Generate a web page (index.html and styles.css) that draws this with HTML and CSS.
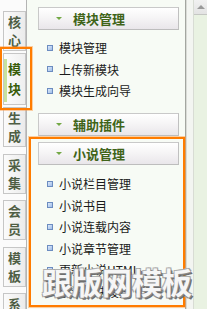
FILE: index.html
```html
<!DOCTYPE html>
<html lang="zh-CN">
<head>
<meta charset="utf-8">
<title>模块</title>
<link rel="stylesheet" href="styles.css">
</head>
<body>
<div class="app">
  <nav class="tabs">
    <div class="tab tab-first"><span>核</span><span>心</span></div>
    <div class="tab tab-on"><span>模</span><span>块</span></div>
    <div class="tab tab-after"><span>生</span><span>成</span></div>
    <div class="tab"><span>采</span><span>集</span></div>
    <div class="tab"><span>会</span><span>员</span></div>
    <div class="tab"><span>模</span><span>板</span></div>
    <div class="tab"><span>系</span><span>统</span></div>
  </nav>
  <main class="panel">
    <section class="sec">
      <div class="hd hd-1"><i class="arr"></i>模块管理</div>
      <ul class="list list-1">
        <li><i class="dot"></i>模块管理</li>
        <li><i class="dot"></i>上传新模块</li>
        <li><i class="dot"></i>模块生成向导</li>
      </ul>
    </section>
    <section class="sec">
      <div class="hd hd-2"><i class="arr"></i>辅助插件</div>
    </section>
    <section class="sec">
      <div class="hd hd-3"><i class="arr"></i>小说管理</div>
      <ul class="list list-3">
        <li><i class="dot"></i>小说栏目管理</li>
        <li><i class="dot"></i>小说书目</li>
        <li><i class="dot"></i>小说连载内容</li>
        <li><i class="dot"></i>小说章节管理</li>
        <li><i class="dot"></i>更新小说HTML</li>
        <li><i class="dot"></i>小说模块设置</li>
      </ul>
    </section>
  </main>
  <aside class="rail">
    <div class="sb"><div class="sb-up"><i class="up"></i></div></div>
  </aside>
  <div class="mark mark-tab"></div>
  <div class="mark mark-sec"></div>
  <div class="wm">跟版网模板</div>
</div>
</body>
</html>
```

FILE: styles.css
```css
* { box-sizing: border-box; }
html, body { margin: 0; padding: 0; }
body {
  width: 207px;
  height: 309px;
  overflow: hidden;
  font-family: "Noto Sans CJK SC", "Liberation Sans", sans-serif;
  background: #f7fbf5;
}
.app {
  position: relative;
  display: flex;
  width: 207px;
  height: 309px;
  overflow: hidden;
}

/* left tabs */
.tabs {
  width: 27px;
  flex: none;
  padding: 11px 0 0 3px;
  background: #fbfbfb;
  border-right: 1px solid #b4b4b4;
  display: flex;
  flex-direction: column;
}
.tab {
  width: 23px;
  height: 40px;
  flex: none;
  margin-bottom: 6.5px;
  border: 1px solid #c6c6c6;
  background: linear-gradient(90deg, #fbfbfb, #ebebeb);
  display: flex;
  flex-direction: column;
  align-items: center;
  padding-top: 1px;
  font-size: 13px;
  font-weight: 700;
  line-height: 18px;
  color: #4f5e44;
}
.tab-first { margin-bottom: 2px; }
.tab-on {
  height: 52px;
  margin-bottom: 2px;
  padding-top: 5px;
  line-height: 20px;
  color: #385c08;
  background:
    linear-gradient(#c7e29e, #c7e29e) no-repeat 0 5px / 3px calc(100% - 7px),
    linear-gradient(90deg, #fcfcfc, #efefef);
}

/* middle panel */
.panel {
  width: 159px;
  flex: none;
  padding: 0 0 0 11px;
  background: #f7fbf5;
  border-right: 1px solid #a3a6a0;
}
.hd {
  width: 141px;
  height: 23px;
  border: 1px solid #c9c9c9;
  border-right-color: #c0c0c0;
  border-bottom-color: #bdbdbd;
  background: linear-gradient(#ffffff, #f6f5f6 45%, #e9e6ea);
  display: flex;
  align-items: center;
  padding-left: 17px;
  font-size: 13px;
  font-weight: 700;
  color: #3f6418;
  line-height: 1;
}
.hd-1 { margin-top: 7px; }
.hd-2 { margin-top: 7px; }
.hd-3 { margin-top: 6px; }
.arr {
  width: 0;
  height: 0;
  border-left: 3px solid transparent;
  border-right: 3px solid transparent;
  border-top: 3px solid #73a845;
  margin-right: 11px;
}
.list {
  list-style: none;
  margin: 0;
  padding: 7px 0 4.5px 9px;
}
.list-3 { padding-top: 8px; }
.list li {
  height: 21.5px;
  display: flex;
  align-items: center;
  font-size: 12px;
  color: #1a1a1a;
  white-space: nowrap;
}
.dot {
  width: 6px;
  height: 6px;
  flex: none;
  margin-right: 6px;
  border: 1px solid #6c8cc0;
  background: linear-gradient(135deg, #dce9fb, #9fbde8);
}

/* right rail */
.rail {
  width: 21px;
  flex: none;
  background: #f3f5f1;
  border-left: 1px solid #d9dbd6;
}
.sb {
  margin-left: 6px;
  width: 14px;
  height: 100%;
  border-left: 1px solid #d8dcd4;
  background: #e9f2e2;
}
.sb-up {
  height: 15px;
  border-bottom: 1px solid #c5c7c3;
  background: linear-gradient(#f1f1f1, #e3e3e3);
  display: flex;
  justify-content: center;
  padding-top: 5px;
}
.up {
  width: 0;
  height: 0;
  border-left: 4px solid transparent;
  border-right: 4px solid transparent;
  border-bottom: 4px solid #9a9a9a;
}

/* annotation overlays */
.mark {
  position: absolute;
  border: 2px solid #ff7c00;
  box-shadow: 0 0 0 1px rgba(255, 150, 60, 0.45);
  pointer-events: none;
}
.mark-tab { left: 0; top: 47px; width: 32px; height: 63px; }
.mark-sec { left: 29px; top: 137px; width: 156px; height: 170px; }

/* watermark */
.wm {
  position: absolute;
  left: 42px;
  top: 265px;
  font-size: 30px;
  font-weight: 700;
  line-height: 32px;
  color: #f6f6f6;
  letter-spacing: 0;
  white-space: nowrap;
  text-shadow:
    1px 1px 0 #8a8a8a,
    2px 2px 0 #6e6e6e,
    -1px -1px 0 #b0b0b0,
    1px -1px 0 #a0a0a0,
    -1px 1px 0 #a0a0a0;
}
```
